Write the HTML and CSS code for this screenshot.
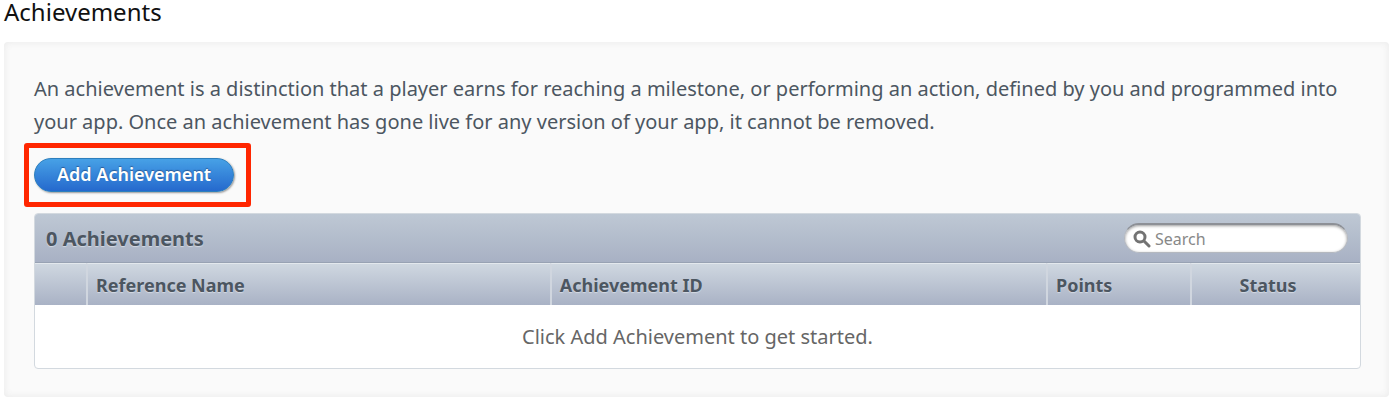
FILE: index.html
```
<!DOCTYPE html>
<html lang="en">

<head>
    <meta charset="UTF-8">
    <meta name="viewport" content="width=device-width, initial-scale=1.0">
    <link rel="stylesheet" href="styles.css">
    <title>Achievements</title>
</head>

<body>
    <h1>Achievements</h1>

    <main class="panel">
        <p class="intro">An achievement is a distinction that a player earns for reaching a milestone, or performing an action, defined by you and programmed into your app. Once an achievement has gone live for any version of your app, it cannot be removed.</p>

        <div class="highlight">
            <button type="button" class="add-button">Add Achievement</button>
        </div>

        <section class="list">
            <div class="list-header">
                <h2>0 Achievements</h2>
                <label class="search">
                    <svg width="18" height="18" viewBox="0 0 18 18" aria-hidden="true">
                        <circle cx="7" cy="7" r="5" fill="none" stroke="#737373" stroke-width="3"/>
                        <path d="M11 11l5 5" stroke="#737373" stroke-width="3" stroke-linecap="round"/>
                    </svg>
                    <input type="search" placeholder="Search" aria-label="Search">
                </label>
            </div>
            <table>
                <thead>
                    <tr>
                        <th class="col-select"></th>
                        <th class="col-name">Reference Name</th>
                        <th>Achievement ID</th>
                        <th class="col-points">Points</th>
                        <th class="col-status">Status</th>
                    </tr>
                </thead>
                <tbody>
                    <tr>
                        <td colspan="5">Click Add Achievement to get started.</td>
                    </tr>
                </tbody>
            </table>
        </section>
    </main>
</body>

</html>
```

FILE: styles.css
```
* {
    box-sizing: border-box;
}

body {
    margin: 0;
    padding: 0 3px 2px 4px;
    background: #fff;
    color: #4c5661;
    font-family: "Lucida Grande", "Noto Sans", sans-serif;
    font-size: 20px;
}

h1 {
    margin: 0 0 18px;
    color: #111;
    font-size: 24px;
    font-weight: normal;
    line-height: 24px;
}

.panel {
    padding: 30px 20px 28px;
    background: #fafafa;
    border-radius: 4px;
    box-shadow: inset 0 0 6px 1px #ececec;
}

.intro {
    margin: 0 0 5px;
    padding: 0 10px;
    line-height: 33px;
}

.highlight {
    display: inline-block;
    padding: 10px 12px 10px 5px;
    border: 5px solid #ff2600;
    border-radius: 3px;
    vertical-align: top;
}

.add-button {
    display: block;
    height: 34px;
    padding: 0 22px 2px;
    border: 1px solid #2d7fbd;
    border-radius: 17px;
    background: linear-gradient(#47a1e6, #2569cd);
    box-shadow: 1px 1px 2px #999;
    color: #fff;
    font-family: inherit;
    font-size: 18px;
    font-weight: 600;
    line-height: 24px;
    text-shadow: 0 -1px 1px #2b5c96;
}

.list {
    margin: 6px 8px 0 10px;
    overflow: hidden;
    border: 1px solid #d3d9df;
    border-radius: 4px;
    background: #fff;
}

.list-header {
    display: flex;
    align-items: center;
    justify-content: space-between;
    height: 49px;
    padding: 0 12px 0 11px;
    border-bottom: 1px solid #98a2b3;
    background: linear-gradient(#bec8d4, #a8b1c4);
}

h2 {
    margin: 0;
    font-size: 20px;
    font-weight: bold;
    text-shadow: 0 1px 1px #d4dae3;
}

.search {
    display: flex;
    align-items: center;
    gap: 4px;
    width: 224px;
    height: 30px;
    padding: 0 8px;
    border: 1px solid #b4b8bf;
    border-top: 2px solid #8d9096;
    border-radius: 15px;
    background: #fff;
    box-shadow: inset 0 1px 3px #999;
}

.search svg {
    flex-shrink: 0;
}

.search input {
    width: 100%;
    min-width: 0;
    padding: 0;
    border: 0;
    outline: 0;
    background: none;
    font-family: inherit;
    font-size: 16px;
}

.search input::placeholder {
    color: #888;
}

table {
    width: 100%;
    border-collapse: separate;
    border-spacing: 0;
    table-layout: fixed;
}

thead {
    background: linear-gradient(#d0d8e1, #a9b2c5);
}

th {
    height: 42px;
    padding: 0 8px;
    border-top: 1px solid #e3e8ed;
    border-left: 2px solid #d0d6df;
    font-size: 18px;
    font-weight: bold;
    text-align: left;
    text-shadow: 0 1px 1px #d4dae3;
}

.col-select {
    width: 51px;
    border-left: 0;
}

.col-name {
    width: 35%;
}

.col-points {
    width: 144px;
}

.col-status {
    width: 170px;
    padding-right: 24px;
    text-align: center;
}

td {
    height: 63px;
    padding: 0;
    color: #666;
    font-size: 20px;
    text-align: center;
}
```
